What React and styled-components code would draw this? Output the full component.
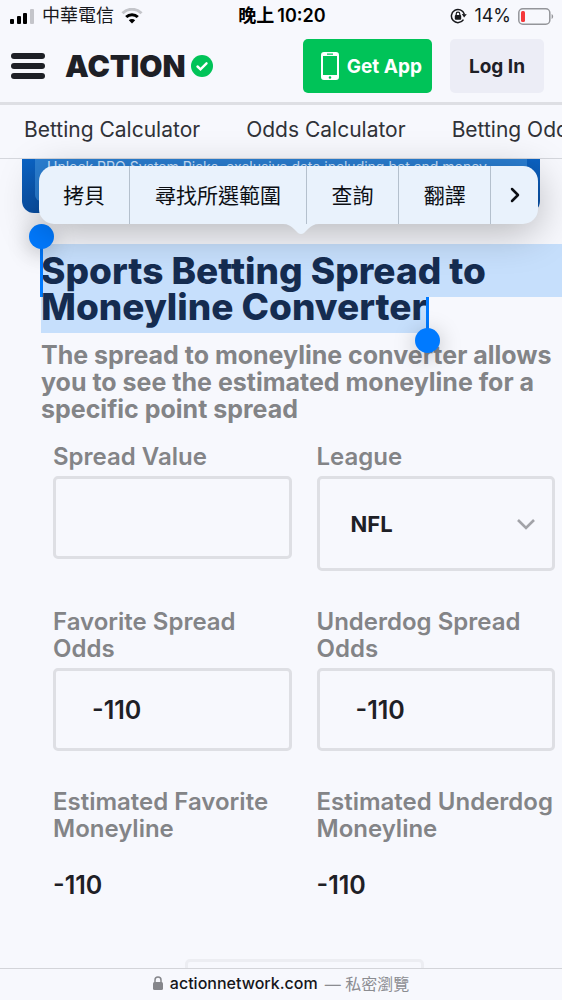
import React, { useState } from "react";
import styled, { createGlobalStyle, ThemeProvider } from "styled-components";

const theme = {
  color: {
    page: "#f7f8fd",
    ink: "#1e2026",
    muted: "#838487",
    line: "#dedfe4",
    green: "#00c358",
    handle: "#007aff",
    selection: "#c6dffc",
    heading: "#152c50"
  },
  font: `Inter, "Noto Sans CJK TC", sans-serif`
};

const GlobalStyle = createGlobalStyle`
  * {
    box-sizing: border-box;
  }

  body {
    margin: 0;
    background: ${theme.color.page};
    color: ${theme.color.ink};
    font-family: ${theme.font};
  }

  button, input, select {
    font-family: inherit;
  }
`;

const Screen = styled.div`
  display: flex;
  flex-direction: column;
  height: 100vh;
  overflow: hidden;
`;

const StatusBar = styled.div`
  display: grid;
  grid-template-columns: 1fr auto 1fr;
  align-items: center;
  height: 30px;
  padding: 2px 8px 0 10px;
  color: #17181c;
  font-size: 18px;
  line-height: 28px;
`;

const StatusGroup = styled.div`
  display: flex;
  align-items: center;
  justify-content: ${({ $end }) => ($end ? "flex-end" : "flex-start")};
  gap: 7px;
`;

const Clock = styled.time`
  display: flex;
  gap: 3px;
  color: #000;
  font-weight: 600;
`;

const Header = styled.header`
  display: flex;
  align-items: center;
  height: 75px;
  padding: 0 18px 0 10px;
  border-bottom: 3px solid ${({ theme }) => theme.color.line};
`;

const MenuButton = styled.button`
  display: flex;
  padding: 0;
  border: 0;
  background: none;
`;

const Logo = styled.a`
  display: flex;
  align-items: center;
  gap: 6px;
  margin-left: 20px;
  color: ${({ theme }) => theme.color.ink};
  font-size: 30px;
  font-weight: 900;
  line-height: 36px;
  text-decoration: none;
`;

const HeaderActions = styled.div`
  display: flex;
  gap: 18px;
  margin-left: auto;
`;

const HeaderButton = styled.button`
  display: flex;
  align-items: center;
  justify-content: center;
  gap: 8px;
  height: 54px;
  padding: ${({ $primary }) => ($primary ? "0 10px 0 18px" : "0 19px")};
  border: 0;
  border-radius: 5px;
  background: ${({ $primary, theme }) =>
    $primary ? theme.color.green : "#ecedf6"};
  color: ${({ $primary, theme }) => ($primary ? "#fff" : theme.color.ink)};
  font-size: 19px;
  font-weight: 700;
  white-space: nowrap;
`;

const Tabs = styled.nav`
  display: flex;
  flex: none;
  gap: 46px;
  height: 54px;
  padding: 0 24px;
  border-bottom: 1px solid #d5d7dd;
  overflow: hidden;
`;

const Tab = styled.a`
  flex: none;
  color: #303238;
  font-size: 21px;
  line-height: 49px;
  text-decoration: none;
  white-space: nowrap;
`;

const Content = styled.main`
  position: relative;
  flex: 1;
  min-height: 0;
`;

const Banner = styled.div`
  height: 54px;
  margin: 0 22px;
  padding: 0 13px 12px;
  border-radius: 0 0 12px 12px;
  background: linear-gradient(#0b63c4, #0a50a4);
`;

const BannerText = styled.p`
  height: 42px;
  margin: 0;
  padding: 0 12px;
  border-radius: 0 0 6px 6px;
  background: #2b7fd3;
  color: #cfe6ff;
  font-size: 14px;
  line-height: 15px;
  overflow: hidden;
  white-space: nowrap;
`;

const EditMenu = styled.div`
  position: absolute;
  z-index: 2;
  top: 7px;
  right: 24px;
  left: 39px;
  display: flex;
  height: 58px;
  border-radius: 15px;
  background: #e9f2fc;
  box-shadow: 0 8px 40px rgba(0, 0, 0, 0.28);
`;

const EditAction = styled.button`
  flex: ${({ $grow }) => $grow} 1 0;
  padding: 0 0 3px;
  border: 0;
  border-left: 1px solid #b4c0cd;
  background: none;
  color: #0c0f14;
  font-size: 21px;
  white-space: nowrap;

  &:first-child {
    border-left: 0;
  }

  svg {
    vertical-align: middle;
  }
`;

const MenuPointer = styled.svg`
  position: absolute;
  top: 100%;
  left: calc(50% + 12px);
  margin-left: -18px;
`;

const Article = styled.section`
  padding: 31px 0 0 41px;
`;

const Title = styled.h1`
  margin: 0;
  color: ${({ theme }) => theme.color.heading};
  font-size: 37px;
  font-weight: 800;
  white-space: nowrap;
`;

const SelectedLine = styled.span`
  position: relative;
  display: block;
  width: ${({ $last }) => ($last ? "fit-content" : "auto")};
  height: ${({ $last }) => ($last ? "36px" : "53px")};
  background: ${({ theme }) => theme.color.selection};
  line-height: ${({ $last }) => ($last ? "20px" : "53px")};

  &::before,
  &::after {
    position: absolute;
    background: ${({ theme }) => theme.color.handle};
    content: "";
  }

  &::before {
    top: 0;
    bottom: 0;
    ${({ $last }) => ($last ? "right: -2px;" : "left: -1px;")}
    width: 3px;
  }

  &::after {
    ${({ $last }) =>
      $last ? "top: 31px; right: -13px;" : "top: -20px; left: -12px;"}
    width: 25px;
    height: 25px;
    border-radius: 50%;
    box-shadow: 0 4px 22px rgba(0, 0, 0, 0.25);
  }
`;

const Intro = styled.p`
  margin: 9px 0 20px;
  color: ${({ theme }) => theme.color.muted};
  font-size: 25px;
  font-weight: 700;
  line-height: 27px;
  white-space: nowrap;
`;

const Form = styled.form`
  display: grid;
  grid-template-columns: 1fr 1fr;
  gap: 37px 25px;
  padding: 0 7px 0 12px;
`;

const FieldBox = styled.div`
  display: flex;
  flex-direction: column;
  gap: ${({ $gap }) => $gap || 6}px;
`;

const Label = styled.label`
  color: ${({ theme }) => theme.color.muted};
  font-size: 24px;
  font-weight: 600;
  line-height: 27px;
`;

const TextInput = styled.input`
  width: 100%;
  height: 83px;
  padding: 0 36px;
  border: 3px solid ${({ theme }) => theme.color.line};
  border-radius: 5px;
  background: none;
  color: ${({ theme }) => theme.color.ink};
  font-size: 25px;
  font-weight: 600;
  outline: 0;
`;

const SelectWrap = styled.div`
  position: relative;

  svg {
    position: absolute;
    top: 50%;
    right: 20px;
    margin-top: -6px;
    pointer-events: none;
  }
`;

const Select = styled(TextInput).attrs({ as: "select" })`
  height: 95px;
  padding: 0 31px;
  appearance: none;
  font-size: 22px;
  font-weight: 700;
`;

const Result = styled.output`
  font-size: 25px;
  font-weight: 600;
  line-height: 27px;
`;

const ResetButton = styled.button`
  display: block;
  width: 239px;
  height: 83px;
  margin: 60px auto 0 144px;
  border: 3px solid #ecedf2;
  border-radius: 5px;
  background: none;
`;

const AddressBar = styled.footer`
  position: relative;
  z-index: 3;
  display: flex;
  align-items: center;
  justify-content: center;
  gap: 7px;
  height: 32px;
  padding-bottom: 3px;
  border-top: 1px solid #d3d4d9;
  background: ${({ theme }) => theme.color.page};
  color: #8b8c91;
  font-size: 16px;
`;

const Domain = styled.span`
  color: #15161a;
  font-weight: 500;
`;

const SignalIcon = () => (
  <svg width="25" height="15" viewBox="0 0 25 15">
    <rect x="0" y="10" width="4" height="5" rx="1" />
    <rect x="7" y="7" width="4" height="8" rx="1" />
    <rect x="13" y="4" width="4" height="11" rx="1" />
    <rect x="20" y="0" width="4" height="15" rx="1" fill="#c4c5ca" />
  </svg>
);

const WifiIcon = () => (
  <svg width="22" height="16" viewBox="0 0 22 16" fill="none">
    <path d="M1.5 5.2a13.5 13.5 0 0 1 19 0" stroke="#c4c5ca" strokeWidth="3" />
    <path d="M5.2 9a8.3 8.3 0 0 1 11.6 0" stroke="#000" strokeWidth="3" />
    <path d="M11 15.6 7.8 12.3a4.6 4.6 0 0 1 6.4 0z" fill="#000" />
  </svg>
);

const RotationLockIcon = () => (
  <svg width="17" height="16" viewBox="0 0 17 16" fill="none">
    <path
      d="M13.5 11.7A6.6 6.6 0 1 1 14.3 6"
      stroke="#17181c"
      strokeWidth="1.5"
    />
    <path d="m11.8 6 5 .2-2.7 3.4z" fill="#17181c" />
    <rect x="4.8" y="7" width="6.4" height="4.8" rx="1" fill="#17181c" />
    <path
      d="M6.2 7.5V6a1.8 1.8 0 0 1 3.6 0v1.5"
      stroke="#17181c"
      strokeWidth="1.2"
    />
  </svg>
);

const BatteryIcon = () => (
  <svg width="36" height="17" viewBox="0 0 36 17" fill="none">
    <rect
      x="0.8"
      y="0.8"
      width="31"
      height="15.4"
      rx="4"
      stroke="#94959a"
      strokeWidth="1.5"
    />
    <rect x="3" y="3" width="4" height="11" rx="1.5" fill="#f5383b" />
    <path d="M33.6 6v5c2-.7 2-4.3 0-5z" fill="#94959a" />
  </svg>
);

const BurgerIcon = () => (
  <svg width="35" height="26" viewBox="0 0 35 26" fill="#1e2026">
    <rect x="1" y="0" width="34" height="6" rx="3" />
    <rect x="1" y="10" width="34" height="6" rx="3" />
    <rect x="1" y="20" width="34" height="6" rx="3" />
  </svg>
);

const CheckBadge = () => (
  <svg width="22" height="22" viewBox="0 0 22 22" fill="none">
    <circle cx="11" cy="11" r="11" fill="#00c358" />
    <path
      d="m6.5 11.5 3 2.8 6-6"
      stroke="#fff"
      strokeWidth="2.4"
      strokeLinecap="round"
    />
  </svg>
);

const PhoneIcon = () => (
  <svg width="18" height="28" viewBox="0 0 18 28">
    <path
      fill="#fff"
      fillRule="evenodd"
      d="M3 0h12a3 3 0 0 1 3 3v22a3 3 0 0 1-3 3H3a3 3 0 0 1-3-3V3a3 3 0 0 1 3-3zM2 4v19h14V4zM6 1.5v1.2h6V1.5zM9 24.2a1.3 1.3 0 1 0 0 2.6 1.3 1.3 0 0 0 0-2.6z"
    />
  </svg>
);

const ChevronDown = () => (
  <svg width="18" height="12" viewBox="0 0 18 12" fill="none">
    <path d="m1 2 8 8 8-8" stroke="#a2a3a8" strokeWidth="2.6" />
  </svg>
);

const ChevronRight = () => (
  <svg width="10" height="16" viewBox="0 0 10 16" fill="none">
    <path
      d="m2 2 6 6-6 6"
      stroke="#0c0f14"
      strokeWidth="2.5"
      strokeLinecap="round"
      strokeLinejoin="round"
    />
  </svg>
);

const LockIcon = () => (
  <svg width="10" height="14" viewBox="0 0 10 14" fill="none">
    <rect x="0" y="6" width="10" height="8" rx="1.5" fill="#85868b" />
    <path d="M2 7V4a3 3 0 0 1 6 0v3" stroke="#85868b" strokeWidth="1.5" />
  </svg>
);

const EDIT_ACTIONS = [
  { label: "拷貝", grow: 91 },
  { label: "尋找所選範圍", grow: 177 },
  { label: "查詢", grow: 92 },
  { label: "翻譯", grow: 92 }
];

const OddsField = ({ id, label, value, onChange }) => (
  <FieldBox>
    <Label htmlFor={id}>{label}</Label>
    <TextInput
      id={id}
      value={value}
      onChange={(e) => onChange(e.target.value)}
    />
  </FieldBox>
);

const App = () => {
  const [spread, setSpread] = useState("");
  const [league, setLeague] = useState("NFL");
  const [favorite, setFavorite] = useState("-110");
  const [underdog, setUnderdog] = useState("-110");

  return (
    <ThemeProvider theme={theme}>
      <GlobalStyle />
      <Screen>
        <StatusBar>
          <StatusGroup>
            <SignalIcon />
            <span>中華電信</span>
            <WifiIcon />
          </StatusGroup>
          <Clock>
            <span>晚上</span>
            <span>10:20</span>
          </Clock>
          <StatusGroup $end>
            <RotationLockIcon />
            <span>14%</span>
            <BatteryIcon />
          </StatusGroup>
        </StatusBar>

        <Header>
          <MenuButton aria-label="Menu">
            <BurgerIcon />
          </MenuButton>
          <Logo href="#">
            ACTION
            <CheckBadge />
          </Logo>
          <HeaderActions>
            <HeaderButton $primary>
              <PhoneIcon />
              Get App
            </HeaderButton>
            <HeaderButton>Log In</HeaderButton>
          </HeaderActions>
        </Header>

        <Tabs>
          <Tab href="#">Betting Calculator</Tab>
          <Tab href="#">Odds Calculator</Tab>
          <Tab href="#">Betting Odds</Tab>
        </Tabs>

        <Content>
          <Banner>
            <BannerText>
              Unlock PRO System Picks, exclusive data including bet and money
            </BannerText>
          </Banner>
          <EditMenu>
            {EDIT_ACTIONS.map(({ label, grow }) => (
              <EditAction key={label} $grow={grow}>
                {label}
              </EditAction>
            ))}
            <EditAction $grow={47} aria-label="More">
              <ChevronRight />
            </EditAction>
            <MenuPointer width="36" height="10" viewBox="0 0 36 10">
              <path
                d="M0 0h36c-5 0-8 2-11 5l-4 4q-3 2-6 0l-4-4C8 2 5 0 0 0z"
                fill="#e9f2fc"
              />
            </MenuPointer>
          </EditMenu>

          <Article>
            <Title>
              <SelectedLine>Sports Betting Spread to</SelectedLine>
              <SelectedLine $last>Moneyline Converter</SelectedLine>
            </Title>
            <Intro>
              The spread to moneyline converter allows
              <br />
              you to see the estimated moneyline for a
              <br />
              specific point spread
            </Intro>
            <Form>
              <OddsField
                id="spread"
                label="Spread Value"
                value={spread}
                onChange={setSpread}
              />
              <FieldBox>
                <Label htmlFor="league">League</Label>
                <SelectWrap>
                  <Select
                    id="league"
                    value={league}
                    onChange={(e) => setLeague(e.target.value)}
                  >
                    <option>NFL</option>
                  </Select>
                  <ChevronDown />
                </SelectWrap>
              </FieldBox>
              <OddsField
                id="favorite"
                label="Favorite Spread Odds"
                value={favorite}
                onChange={setFavorite}
              />
              <OddsField
                id="underdog"
                label="Underdog Spread Odds"
                value={underdog}
                onChange={setUnderdog}
              />
              <FieldBox $gap={30}>
                <Label htmlFor="favorite-line">
                  Estimated Favorite Moneyline
                </Label>
                <Result id="favorite-line">-110</Result>
              </FieldBox>
              <FieldBox $gap={30}>
                <Label htmlFor="underdog-line">
                  Estimated Underdog Moneyline
                </Label>
                <Result id="underdog-line">-110</Result>
              </FieldBox>
            </Form>
            <ResetButton type="button" aria-label="Reset" />
          </Article>
        </Content>

        <AddressBar>
          <LockIcon />
          <Domain>actionnetwork.com</Domain>
          <span>— 私密瀏覽</span>
        </AddressBar>
      </Screen>
    </ThemeProvider>
  );
};

export default App;
